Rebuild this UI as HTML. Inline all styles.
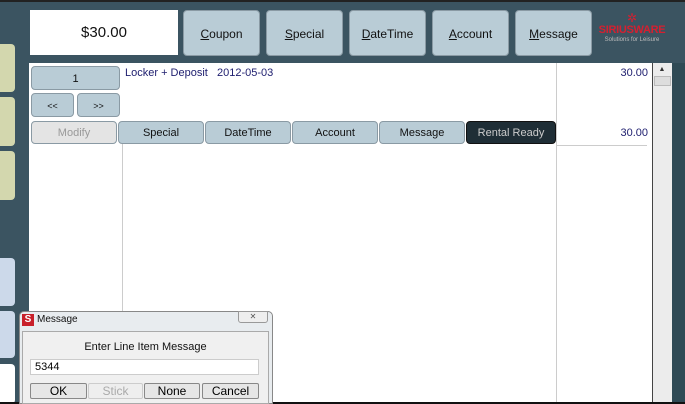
<!DOCTYPE html>
<html><head><meta charset="utf-8"><style>
*{margin:0;padding:0;box-sizing:border-box}
body{width:685px;height:404px;overflow:hidden;background:#3b5461;font-family:"Liberation Sans",sans-serif;position:relative}
.a{position:absolute}
.tile{position:absolute;left:0;width:15px;border-radius:0 4px 4px 0}
.btn{position:absolute;background:#b9ccd6;border:1px solid #8a9aa4;border-radius:4px;text-align:center;color:#111;font-size:12px}
.btn u{text-decoration:underline}
.top{top:10px;height:46px;line-height:46px;width:77px}
.row{top:121px;height:23px;line-height:23px;width:86px;font-size:11px}
.db{position:absolute;background:#e6e6e6;border:1px solid #888;border-radius:2px;height:16px;line-height:14px;text-align:center;font-size:12px;top:383px}
</style></head><body>
<div class="a" style="left:0;top:0;width:685px;height:2px;background:#222"></div>
<div class="tile" style="top:44px;height:48px;background:#d3d7ae"></div>
<div class="tile" style="top:97px;height:49px;background:#d3d7ae"></div>
<div class="tile" style="top:151px;height:49px;background:#d3d7ae"></div>
<div class="tile" style="top:258px;height:48px;background:#ccd9ea"></div>
<div class="tile" style="top:311px;height:47px;background:#ccd9ea"></div>
<div class="tile" style="top:364px;height:40px;background:#fff"></div>

<div class="a" style="left:30px;top:10px;width:148px;height:45px;background:#fff;text-align:center;line-height:45px;font-size:15px;color:#111">$30.00</div>
<div class="btn top" style="left:183px"><u>C</u>oupon</div>
<div class="btn top" style="left:266px"><u>S</u>pecial</div>
<div class="btn top" style="left:349px"><u>D</u>ateTime</div>
<div class="btn top" style="left:432px"><u>A</u>ccount</div>
<div class="btn top" style="left:515px"><u>M</u>essage</div>
<div class="a" style="left:596px;top:12px;width:72px;text-align:center">
<div style="color:#d42030;font-size:12px;line-height:12px">✲</div>
<div style="color:#d42030;font-weight:bold;font-size:11px;line-height:12px;letter-spacing:-0.3px">SIRIUSWARE</div>
<div style="color:#bbb;font-size:6px;line-height:8px">Solutions for Leisure</div></div>

<div class="a" style="left:29px;top:63px;width:623px;height:339px;background:#fff"></div>
<div class="a" style="left:122px;top:144px;width:1px;height:258px;background:#ccc"></div>
<div class="a" style="left:556px;top:63px;width:1px;height:339px;background:#ccc"></div>
<div class="a" style="left:557px;top:145px;width:90px;height:1px;background:#ccc"></div>
<div class="a" style="left:652px;top:63px;width:20px;height:339px;background:#ececec;border-left:1px solid #444"></div>
<div class="a" style="left:655px;top:66px;width:14px;height:10px;font-size:7px;text-align:center;color:#333">▲</div>
<div class="a" style="left:654px;top:76px;width:17px;height:10px;background:#ddd;border:1px solid #bbb"></div>
<div class="a" style="left:672px;top:63px;width:13px;height:341px;background:#2f4a55"></div>
<div class="a" style="left:0;top:402px;width:685px;height:2px;background:#111"></div>

<div class="btn" style="left:31px;top:66px;width:89px;height:24px;line-height:24px;font-size:11px">1</div>
<div class="btn" style="left:31px;top:93px;width:43px;height:24px;line-height:24px;font-size:9px">&lt;&lt;</div>
<div class="btn" style="left:77px;top:93px;width:43px;height:24px;line-height:24px;font-size:9px">&gt;&gt;</div>
<div class="btn row" style="left:31px;width:86px;background:#e4e4e4;color:#999">Modify</div>
<div class="btn row" style="left:118px">Special</div>
<div class="btn row" style="left:205px">DateTime</div>
<div class="btn row" style="left:292px">Account</div>
<div class="btn row" style="left:379px">Message</div>
<div class="btn row" style="left:466px;width:90px;background:#1f2e36;color:#ccc;border-color:#111">Rental Ready</div>
<div class="a" style="left:125px;top:67px;font-size:11px;color:#202070">Locker + Deposit&nbsp;&nbsp; 2012-05-03</div>
<div class="a" style="left:590px;top:67px;width:58px;text-align:right;font-size:11px;color:#202070">30.00</div>
<div class="a" style="left:590px;top:127px;width:58px;text-align:right;font-size:11px;color:#202070">30.00</div>

<div class="a" style="left:19px;top:311px;width:254px;height:93px;background:#e8ecef;border:1px solid #888;border-radius:5px 5px 0 0"></div>
<div class="a" style="left:22px;top:314px;width:12px;height:12px;background:#c8202a;color:#fff;font-weight:bold;font-size:10px;line-height:12px;text-align:center">S</div>
<div class="a" style="left:37px;top:314px;font-size:10px;color:#111">Message</div>
<div class="a" style="left:238px;top:311px;width:30px;height:12px;border:1px solid #999;border-radius:0 0 3px 3px;background:#eee;font-size:8px;text-align:center;color:#555;line-height:10px">✕</div>
<div class="a" style="left:22px;top:331px;width:247px;height:73px;background:#f0f0f0;border:1px solid #aaa"></div>
<div class="a" style="left:22px;top:341px;width:247px;text-align:center;font-size:11px;color:#111">Enter Line Item Message</div>
<div class="a" style="left:30px;top:359px;width:229px;height:16px;background:#fff;border:1px solid #ccc;font-size:11px;line-height:14px;padding-left:4px">5344</div>
<div class="db" style="left:30px;width:57px">OK</div>
<div class="db" style="left:88px;width:55px;color:#aaa;border-color:#ccc;background:#eee">Stick</div>
<div class="db" style="left:144px;width:56px">None</div>
<div class="db" style="left:202px;width:57px">Cancel</div>
</body></html>
